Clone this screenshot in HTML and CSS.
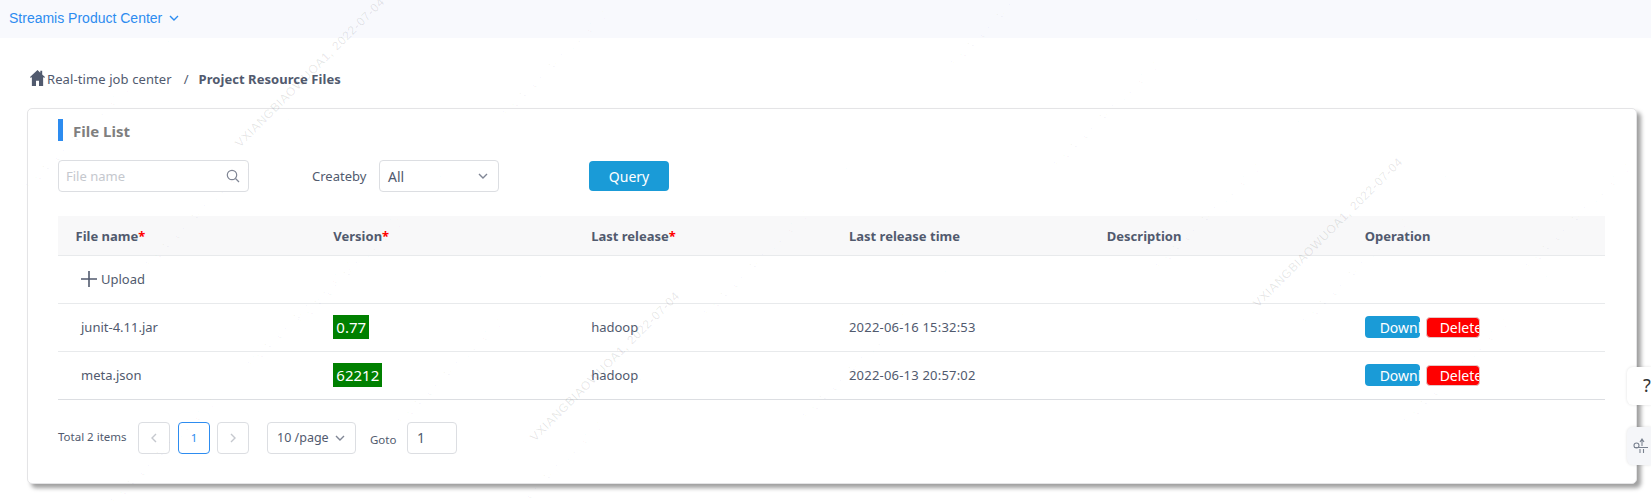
FILE: index.html
```html
<!DOCTYPE html>
<html lang="en">
<head>
    <meta charset="UTF-8">
    <meta name="viewport" content="width=device-width, initial-scale=1.0">
    <title>Project Resource Files</title>
    <link rel="stylesheet" href="styles.css">
</head>
<body>
    <div class="top-bar">
        <span class="product-name">Streamis Product Center</span>
        <svg class="chevron chevron-blue" viewBox="0 0 10 6"><path d="M1 1l4 4 4-4"/></svg>
    </div>

    <div class="breadcrumb">
        <svg class="home-icon" viewBox="0 0 16 17"><path d="M8 0L0 7.500l.9 1L2 7.500V17h4.400v-5.500h3.200V17H14V7.500l1.100 1 .9-1-3-2.800V.8h-2v2.100z"/></svg>
        <span class="crumb">Real-time job center</span>
        <span class="crumb-sep">/</span>
        <span class="crumb-current">Project Resource Files</span>
    </div>

    <div class="card">
        <div class="card-title"><span class="title-mark"></span><span class="title-text">File List</span></div>

        <div class="filters">
            <div class="search-box">
                <input class="search-input" type="text" placeholder="File name">
                <svg class="search-icon" viewBox="0 0 14 14"><circle cx="6" cy="6" r="4.700"/><path d="M9.500 9.500L13 13"/></svg>
            </div>
            <span class="filter-label">Createby</span>
            <div class="select-box">
                <span>All</span>
                <svg class="chevron" viewBox="0 0 10 6"><path d="M1 1l4 4 4-4"/></svg>
            </div>
            <button class="query-btn">Query</button>
        </div>

        <table class="file-table">
            <thead>
                <tr>
                    <th>File name<span class="req">*</span></th>
                    <th>Version<span class="req">*</span></th>
                    <th>Last release<span class="req">*</span></th>
                    <th>Last release time</th>
                    <th>Description</th>
                    <th>Operation</th>
                </tr>
            </thead>
            <tbody>
                <tr>
                    <td class="name-cell">
                        <span class="upload">
                            <svg class="plus-icon" viewBox="0 0 16 16"><path d="M8 0v16M0 8h16"/></svg>
                            Upload
                        </span>
                    </td>
                    <td></td><td></td><td></td><td></td><td></td>
                </tr>
                <tr>
                    <td class="name-cell">junit-4.11.jar</td>
                    <td><span class="version-tag">0.77</span></td>
                    <td>hadoop</td>
                    <td class="time-cell">2022-06-16 15:32:53</td>
                    <td></td>
                    <td>
                        <div class="ops">
                            <button class="btn-download">Download</button>
                            <button class="btn-delete">Delete</button>
                        </div>
                    </td>
                </tr>
                <tr>
                    <td class="name-cell">meta.json</td>
                    <td><span class="version-tag">62212</span></td>
                    <td>hadoop</td>
                    <td class="time-cell">2022-06-13 20:57:02</td>
                    <td></td>
                    <td>
                        <div class="ops">
                            <button class="btn-download">Download</button>
                            <button class="btn-delete">Delete</button>
                        </div>
                    </td>
                </tr>
            </tbody>
        </table>

        <div class="pager">
            <span class="pager-total">Total 2 items</span>
            <span class="page-btn page-prev"><svg class="arrow" viewBox="0 0 6 10"><path d="M5 1L1 5l4 4"/></svg></span>
            <span class="page-btn page-active">1</span>
            <span class="page-btn page-next"><svg class="arrow" viewBox="0 0 6 10"><path d="M1 1l4 4-4 4"/></svg></span>
            <span class="page-size">
                10 /page
                <svg class="chevron" viewBox="0 0 10 6"><path d="M1 1l4 4 4-4"/></svg>
            </span>
            <span class="goto-label">Goto</span>
            <span class="goto-input">1</span>
        </div>
    </div>

    <div class="float-help">?</div>
    <div class="float-tool">
        <svg class="tool-icon" viewBox="0 0 16 16"><circle cx="3.500" cy="7.500" r="2.500"/><path d="M9 8V1M7 4l2-3 2 3M1 9.500h14M7 11v4M10.500 11v4"/></svg>
    </div>

    <svg class="watermark" width="1651" height="504">
        <text class="wm-dark" textLength="205" transform="translate(240 148) rotate(-45)">VXIANGBIAOWUOA1, 2022-07-04</text>
        <text class="wm-dark" textLength="205" transform="translate(535 442) rotate(-45)">VXIANGBIAOWUOA1, 2022-07-04</text>
        <text class="wm-dark" textLength="205" transform="translate(1258 308) rotate(-45)">VXIANGBIAOWUOA1, 2022-07-04</text>
        <text class="wm-faint" textLength="205" transform="translate(302 325) rotate(-45)">VXIANGBIAOWUOA1, 2022-07-04</text>
        <text class="wm-faint" textLength="205" transform="translate(502 528) rotate(-45)">VXIANGBIAOWUOA1, 2022-07-04</text>
        <text class="wm-faint" textLength="205" transform="translate(402 425) rotate(-45)">VXIANGBIAOWUOA1, 2022-07-04</text>
        <text class="wm-faint" textLength="205" transform="translate(1307 325) rotate(-45)">VXIANGBIAOWUOA1, 2022-07-04</text>
        <text class="wm-faint" textLength="205" transform="translate(507 117) rotate(-45)">VXIANGBIAOWUOA1, 2022-07-04</text>
        <text class="wm-faint" textLength="205" transform="translate(807 420) rotate(-45)">VXIANGBIAOWUOA1, 2022-07-04</text>
        <text class="wm-faint" textLength="205" transform="translate(708 317) rotate(-45)">VXIANGBIAOWUOA1, 2022-07-04</text>
        <text class="wm-faint" textLength="205" transform="translate(1058 168) rotate(-45)">VXIANGBIAOWUOA1, 2022-07-04</text>
        <text class="wm-faint" textLength="205" transform="translate(955 67) rotate(-45)">VXIANGBIAOWUOA1, 2022-07-04</text>
        <text class="wm-faint" textLength="205" transform="translate(1160 270) rotate(-45)">VXIANGBIAOWUOA1, 2022-07-04</text>
        <text class="wm-faint" textLength="205" transform="translate(1408 425) rotate(-45)">VXIANGBIAOWUOA1, 2022-07-04</text>
        <text class="wm-faint" textLength="205" transform="translate(252 368) rotate(-45)">VXIANGBIAOWUOA1, 2022-07-04</text>
        <text class="wm-faint" textLength="205" transform="translate(115 505) rotate(-45)">VXIANGBIAOWUOA1, 2022-07-04</text>
        <text class="wm-faint" textLength="205" transform="translate(150 268) rotate(-45)">VXIANGBIAOWUOA1, 2022-07-04</text>
        <text class="wm-faint" textLength="205" transform="translate(30 190) rotate(-45)">VXIANGBIAOWUOA1, 2022-07-04</text>
        <text class="wm-faint" textLength="205" transform="translate(1530 270) rotate(-45)">VXIANGBIAOWUOA1, 2022-07-04</text>
    </svg>
</body>
</html>
```

FILE: styles.css
```css
body {
    margin: 0;
    font-family: "Noto Sans", "Open Sans", sans-serif;
    font-size: 13px;
    color: #515a6e;
    background-color: #fff;
    height: 504px;
    overflow: hidden;
}
.top-bar {
    height: 38px;
    padding: 0 0 3px 9px;
    box-sizing: border-box;
    background-color: #f8f9fd;
    display: flex;
    align-items: center;
    gap: 7px;
}
.product-name {
    font-size: 14px;
    color: #2d8cf0;
    font-family: "Liberation Sans", sans-serif;
}
.chevron {
    width: 10px;
    height: 6px;
    fill: none;
    stroke: #808695;
    stroke-width: 1.4;
}
.chevron-blue {
    stroke: #2d8cf0;
}
.breadcrumb {
    height: 20px;
    margin: 31px 0 0 30px;
    display: flex;
    align-items: center;
}
.home-icon {
    width: 15px;
    height: 16px;
    fill: #515a6e;
    margin: -2px 2px 0 0;
}
.crumb {
    color: #515a6e;
    letter-spacing: 0.1px;
}
.crumb-sep {
    margin: 0 10px 0 12px;
    color: #515a6e;
}
.crumb-current {
    font-weight: 700;
    letter-spacing: 0.05px;
}
.card {
    width: 1610px;
    height: 376px;
    box-sizing: border-box;
    margin: 19px 0 0 27px;
    padding: 10px 31px 0 30px;
    background-color: #fff;
    border: 1px solid #e4e4e6;
    border-radius: 5px;
    box-shadow: 4px 4px 4px #a0a0a0;
}
.card-title {
    height: 22px;
    display: flex;
    align-items: center;
    font-size: 15px;
    font-weight: 700;
    color: #7f7f7f;
}
.title-mark {
    width: 5px;
    height: 22px;
    margin-right: 10px;
    background-color: #2d8cf0;
}
.title-text {
    padding-top: 2px;
}
.filters {
    margin-top: 19px;
    height: 32px;
    display: flex;
    align-items: center;
}
.search-box {
    width: 191px;
    height: 32px;
    box-sizing: border-box;
    border: 1px solid #dcdee2;
    border-radius: 4px;
    display: flex;
    align-items: center;
    padding: 0 8px 0 7px;
}
.search-input {
    flex: 1;
    min-width: 0;
    border: none;
    outline: none;
    padding: 0;
    font: inherit;
    background: transparent;
}
.search-input::placeholder {
    color: #c5c8ce;
}
.search-icon {
    width: 14px;
    height: 14px;
    fill: none;
    stroke: #808695;
    stroke-width: 1.2;
}
.filter-label {
    margin-left: 63px;
    width: 67px;
}
.select-box {
    width: 120px;
    height: 32px;
    box-sizing: border-box;
    border: 1px solid #dcdee2;
    border-radius: 4px;
    display: flex;
    align-items: center;
    justify-content: space-between;
    padding: 0 10px 0 8px;
    font-size: 14px;
}
.query-btn {
    margin-left: 90px;
    width: 80px;
    height: 30px;
    border: none;
    border-radius: 4px;
    background-color: #1a9bd7;
    color: #fff;
    font: inherit;
    font-size: 14px;
}
.file-table {
    margin-top: 24px;
    width: 100%;
    table-layout: fixed;
    border-collapse: collapse;
}
.file-table th {
    height: 39px;
    padding: 2px 0 0 17.5px;
    box-sizing: border-box;
    text-align: left;
    font-weight: 700;
    background-color: #f8f8f9;
    border-bottom: 1px solid #e8eaec;
}
.file-table td {
    height: 47px;
    padding: 0 0 0 17.5px;
    border-bottom: 1px solid #e8eaec;
}
.file-table tbody tr:last-child td {
    border-bottom-color: #dcdee2;
}
.file-table td.name-cell {
    padding-left: 23px;
}
.file-table td.time-cell {
    letter-spacing: 0.2px;
}
.req {
    color: #ff0000;
}
.upload {
    display: flex;
    align-items: center;
    gap: 4px;
    margin-top: -1px;
}
.plus-icon {
    width: 16px;
    height: 16px;
    fill: none;
    stroke: #515a6e;
    stroke-width: 1.6;
}
.version-tag {
    display: inline-block;
    height: 24px;
    line-height: 24px;
    padding: 0 3px;
    background-color: #008000;
    color: #fff;
    font-size: 15px;
}
.ops {
    display: flex;
    align-items: center;
    gap: 6px;
}
.ops button {
    height: 22px;
    padding: 0 0 0 15px;
    text-align: left;
    border: none;
    border-radius: 4px;
    color: #fff;
    font: inherit;
    font-size: 14px;
    white-space: nowrap;
    overflow: hidden;
}
.btn-download {
    width: 55px;
    background-color: #1a9bd7;
}
.ops .btn-delete {
    width: 54px;
    height: 21px;
    padding-left: 13px;
    background-color: #ff0000;
    border: 1px solid #e4c8c8;
}
.pager {
    margin-top: 22px;
    display: flex;
    align-items: center;
    font-size: 11.5px;
}
.pager-total {
    width: 80px;
    margin-bottom: 3px;
}
.page-btn, .page-size, .goto-input {
    height: 32px;
    box-sizing: border-box;
    border: 1px solid #dcdee2;
    border-radius: 4px;
    display: flex;
    align-items: center;
}
.page-btn {
    width: 32px;
    justify-content: center;
}
.page-active {
    margin: 0 7px 0 8px;
    border-color: #2d8cf0;
    color: #2d8cf0;
}
.arrow {
    width: 6px;
    height: 10px;
    fill: none;
    stroke: #c5c8ce;
    stroke-width: 1.4;
}
.page-size {
    width: 89px;
    margin-left: 18px;
    padding: 0 10px 0 9px;
    justify-content: space-between;
    font-size: 12.5px;
}
.goto-label {
    margin: 4px 11px 0 14px;
    width: 26px;
}
.goto-input {
    width: 50px;
    padding-left: 9px;
    font-size: 14px;
}
.float-help, .float-tool {
    position: absolute;
    right: 0;
    width: 24px;
    height: 38px;
    box-sizing: border-box;
    border-radius: 6px 0 0 6px;
    box-shadow: 0 0 3px rgba(0, 0, 0, 0.12);
}
.float-help {
    top: 367px;
    padding: 6px 0 0 16px;
    background-color: #fff;
    font-size: 18px;
    color: #333;
    overflow: hidden;
}
.float-tool {
    top: 427px;
    background-color: #f5f6f9;
    display: flex;
    align-items: center;
    padding-left: 6px;
}
.tool-icon {
    width: 16px;
    height: 16px;
    flex-shrink: 0;
    fill: none;
    stroke: #7a8290;
    stroke-width: 1.1;
}
.watermark {
    position: absolute;
    top: 0;
    left: 0;
    pointer-events: none;
    font-family: "Liberation Sans", sans-serif;
    font-size: 12px;
}
.wm-dark {
    fill: rgba(0, 0, 0, 0.1);
}
.wm-faint {
    fill: rgba(0, 0, 0, 0.028);
}
```
